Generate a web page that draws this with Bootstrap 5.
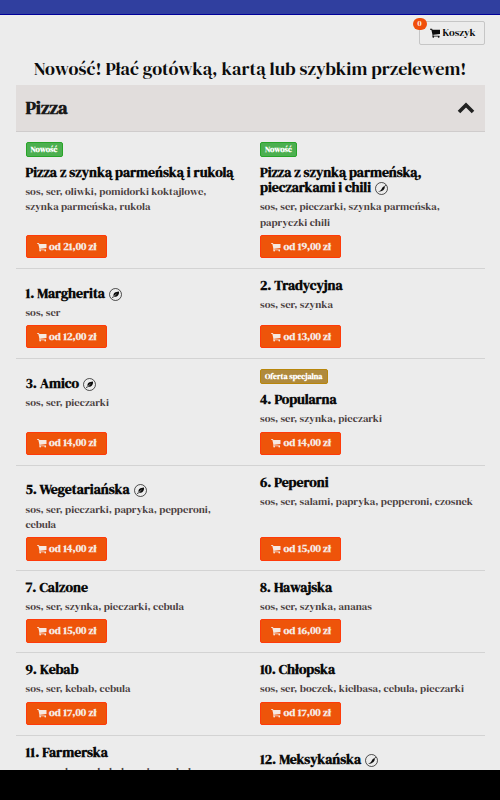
<!DOCTYPE html>
<html lang="pl">
<head>
<meta charset="utf-8">
<meta name="viewport" content="width=device-width, initial-scale=1">
<title>Pizza – menu</title>
<link href="https://cdn.jsdelivr.net/npm/bootstrap@5.3.0/dist/css/bootstrap.min.css" rel="stylesheet">
<style>
body{background:#000;color:#0c0c0c;font-family:"DM Serif Display","DM Serif Text","Liberation Serif",serif;font-variant-numeric:lining-nums;width:500px;height:800px;overflow:hidden}
.screen{height:770px;background:#ececec}
.topbar{height:15px;background:#303f9f;border-bottom:1px solid #00009a}
.tools{height:31px;padding:6px 15.5px 0}
.cart-btn{width:66px;height:24px;border:1px solid #c6c6c6;border-radius:2px;font-size:10.5px;line-height:22px;padding:0 8px 0 10px}
.cart-count{left:-7px;top:-4px;width:14px;height:12px;border-radius:6px;background:#f04e0a;color:#fff;font-size:8px;line-height:12px}
.promo{font-size:18.2px;line-height:24px;margin:11px 0 4px;height:24px}
.menu{margin:0 15.5px}
.cat{height:46.5px;background:#e1dddc;border-bottom:1px solid #cfcccc;padding:0 9.5px 0 10px}
.cat-name{font-size:18.5px;line-height:46px;color:#1a1a1a}
.dish-row{border-bottom:1px solid #d3d3d3}
.dish{padding:8.9px 0 9.5px 10px}
.tag{height:15px;border-radius:2px;font-size:8px;font-weight:700;line-height:13px;padding:0 4px;color:#fff;margin:1.5px 0 8px;border:1px solid #28a428;background:#4caf50}
.tag.offer{background:#b08a3c;border-color:#b8860b}
.dish-name{font-size:13.8px;line-height:15.3px;font-weight:700;margin:0}
.dish-name.marked{padding-top:7.8px}
.dish-name svg{width:13px;height:13px;margin-left:1px;vertical-align:-3px;margin-top:-5px}
.desc{font-size:10.6px;line-height:15.3px;color:#4a4040;margin:3.8px 0 5px}
.buy{width:81px;height:23.5px;background:#ee540a;border:1px solid #ff3a0a;border-radius:2px;color:#f6e9e2;font-size:10.6px;font-weight:700;line-height:20px;padding:0 0 0 10px}
.buy svg{margin-right:2.5px}
.fit{white-space:nowrap}
</style>
<script src="https://cdn.jsdelivr.net/npm/bootstrap@5.3.0/dist/js/bootstrap.bundle.min.js"></script>
</head>
<body>
<svg class="d-none">
<symbol id="cart" viewBox="0 0 20 18"><path fill="currentColor" d="M0 1h4l.7 2H19v8L6.500 12.400V14H18v1.600H4.800v-3L2.600 2.600H0z"/><circle fill="currentColor" cx="6.300" cy="16.200" r="1.700"/><circle fill="currentColor" cx="16.500" cy="16.200" r="1.700"/></symbol>
<symbol id="leaf" viewBox="0 0 26 26"><circle cx="13" cy="13" r="12" fill="none" stroke="currentColor" stroke-width="1.400"/><path fill="currentColor" d="M20 7c.4 7-2.500 11-10 10.500L7.500 20 6 19l3-3c-.5-6 3-8.500 11-9z"/><path d="M8 18l7-6" stroke="#ececec" stroke-width="1"/></symbol>
<symbol id="chili" viewBox="0 0 26 26"><circle cx="13" cy="13" r="12" fill="none" stroke="currentColor" stroke-width="1.400"/><path fill="currentColor" d="M21 5.500l.9 1.200-2.300 3c0 6-4.500 10-13.600 9.800 5-1.400 7-4 8.500-8 1-1.800 2.600-2.400 4-2.600z"/></symbol>
</svg>
<main class="screen overflow-hidden">
<div class="topbar"></div>
<div class="tools d-flex justify-content-end">
<div class="cart-btn position-relative d-flex align-items-center justify-content-between"><span class="cart-count position-absolute text-center">0</span><svg width="10.500" height="10"><use href="#cart"/></svg><span class="fit" data-w="33">Koszyk</span></div>
</div>
<div class="promo text-center"><span class="fit" data-w="432.500">Nowość! Płać gotówką, kartą lub szybkim przelewem!</span></div>
<div class="menu">
<div class="cat d-flex justify-content-between align-items-center"><span class="cat-name fit fw-bold" data-w="42">Pizza</span><svg width="18" height="12" viewBox="0 0 18 12"><path d="M2 10l7-7 7 7" fill="none" stroke="#222" stroke-width="3.600"/></svg></div>
<div id="dishes"></div>
</div>
</main>
<script>
// tag, [name line, width], mark, [description line, width], price
const dishes=[
['Nowość',[['Pizza z szynką parmeńską i rukolą',208]],'',[['sos, ser, oliwki, pomidorki koktajlowe,',181],['szynka parmeńska, rukola',125]],'21,00'],
['Nowość',[['Pizza z szynką parmeńską,',161.5],['pieczarkami i chili',111]],'chili',[['sos, ser, pieczarki, szynka parmeńska,',180],['papryczki chili',70]],'19,00'],
['',[['1. Margherita',79.5]],'leaf',[['sos, ser',35]],'12,00'],
['',[['2. Tradycyjna',82.5]],'',[['sos, ser, szynka',73]],'13,00'],
['',[['3. Amico',53.5]],'leaf',[['sos, ser, pieczarki',83.5]],'14,00'],
['Oferta specjalna',[['4. Popularna',76.5]],'',[['sos, ser, szynka, pieczarki',122]],'14,00'],
['',[['5. Wegetariańska',104]],'leaf',[['sos, ser, pieczarki, papryka, pepperoni,',185.5],['cebula',30.5]],'14,00'],
['',[['6. Peperoni',68.5]],'',[['sos, ser, salami, papryka, pepperoni, czosnek',213]],'15,00'],
['',[['7. Calzone',62.5]],'',[['sos, ser, szynka, pieczarki, cebula',158.5]],'15,00'],
['',[['8. Hawajska',72]],'',[['sos, ser, szynka, ananas',112]],'16,00'],
['',[['9. Kebab',53]],'',[['sos, ser, kebab, cebula',105]],'17,00'],
['',[['10. Chłopska',75]],'',[['sos, ser, boczek, kiełbasa, cebula, pieczarki',204]],'17,00'],
['',[['11. Farmerska',82.5]],'',[['sos, ser, kurczak, kukurydza, cebula',171]],'18,00'],
['',[['12. Meksykańska',101]],'chili',[['sos, ser, szynka, papryka, chili',150]],'18,00']];
const fit=l=>`<span class="fit" data-w="${l[1]}">${l[0]}</span>`;
const card=([tag,name,mark,desc,price])=>`<div class="col-6 dish d-flex flex-column align-items-start">
${tag?`<span class="tag ${tag[0]=='O'?'offer':''}">${fit([tag,tag[0]=='O'?57.5:27])}</span>`:''}
<h2 class="dish-name ${mark&&!tag?'marked':''}">${name.map(fit).join('<br>')}${mark?` <svg><use href="#${mark}"/></svg>`:''}</h2>
<p class="desc">${desc.map(fit).join('<br>')}</p>
<div class="buy mt-auto d-flex align-items-center"><svg width="10" height="10"><use href="#cart"/></svg>${fit(['od '+price+' zł',47.5])}</div></div>`;
let html='';
for(let i=0;i<dishes.length;i+=2)html+=`<div class="dish-row row g-0">${card(dishes[i])}${card(dishes[i+1])}</div>`;
document.getElementById('dishes').innerHTML=html;
// Tracking so each line takes its set width
document.querySelectorAll('.fit').forEach(e=>{
const r=document.createRange();r.selectNodeContents(e);
e.style.letterSpacing=(e.dataset.w-r.getBoundingClientRect().width)/e.textContent.length+'px';
});
</script>
</body>
</html>
